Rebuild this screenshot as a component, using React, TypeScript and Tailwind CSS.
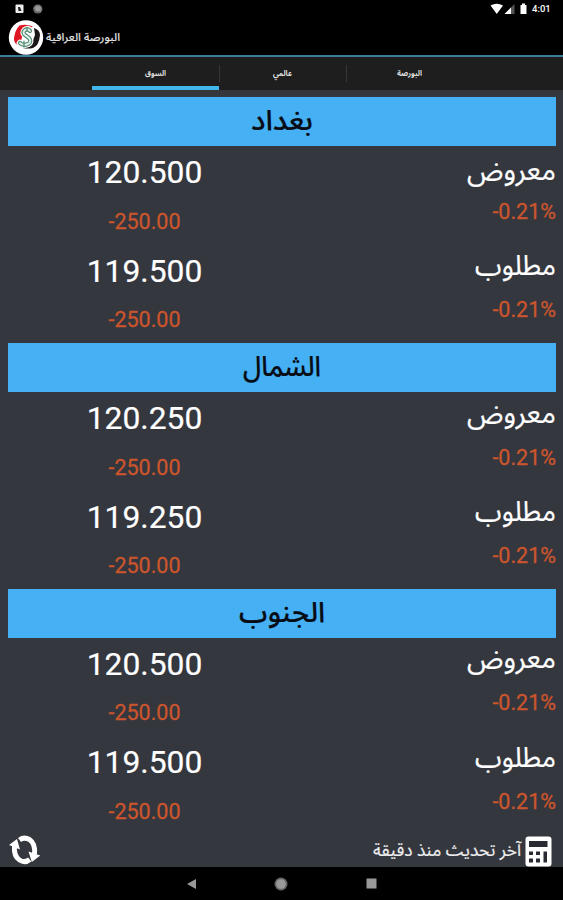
import React from "react";

const arabic = "font-['Noto_Sans_Arabic','DejaVu_Sans',sans-serif]";

type Quote = { label: string; price: string };
type Market = { name: string; nameWidth: number; quotes: Quote[] };

const markets: Market[] = [
  { name: "بغداد", nameWidth: 62, quotes: [{ label: "معروض", price: "120.500" }, { label: "مطلوب", price: "119.500" }] },
  { name: "الشمال", nameWidth: 78, quotes: [{ label: "معروض", price: "120.250" }, { label: "مطلوب", price: "119.250" }] },
  { name: "الجنوب", nameWidth: 86, quotes: [{ label: "معروض", price: "120.500" }, { label: "مطلوب", price: "119.500" }] },
];

const labelWidths: Record<string, number> = { معروض: 89, مطلوب: 81 };

function Label({ text, width, size, weight = 400, color = "#fff", height = 40, baseline = 28, stroke = 0 }: {
  text: string; width: number; size: number; weight?: number; color?: string; height?: number; baseline?: number; stroke?: number;
}) {
  return (
    <svg width={width} height={height} className={`block overflow-visible ${arabic}`}>
      <text x={width / 2} y={baseline} textAnchor="middle" direction="rtl" fontSize={size} fontWeight={weight} fill={color} stroke={color} strokeWidth={stroke} textLength={width} lengthAdjust="spacingAndGlyphs">
        {text}
      </text>
    </svg>
  );
}

function Row({ quote, first }: { quote: Quote; first: boolean }) {
  return (
    <div className="flex h-[98.4px] justify-between pr-[7px] pl-[7px]">
      <div className="flex w-[275px] flex-col items-center">
        <div className="mt-[7px] h-[38px] text-[31.8px] leading-[38px] text-white [-webkit-text-stroke:0.2px_#fff]">{quote.price}</div>
        <div className="mt-[17.5px] text-[21.5px] leading-[26px] text-[#cb552c] [-webkit-text-stroke:0.3px_#cb552c]">-250.00</div>
      </div>
      <div className="flex flex-col items-end">
        <div className={first ? "h-[52.5px] pt-[6px]" : "h-[52.5px] pt-[2.5px]"}>
          <Label text={quote.label} width={labelWidths[quote.label]} size={28} stroke={0.2} />
        </div>
        <div className="text-[21.5px] leading-[26px] text-[#cb552c] [-webkit-text-stroke:0.3px_#cb552c]">-0.21%</div>
      </div>
    </div>
  );
}

function StatusBar() {
  return (
    <div className="flex h-[18px] items-center justify-between pr-[12px] pl-[15px]">
      <svg width="30" height="18" viewBox="0 0 30 18">
        <rect x=".5" y="4.5" width="8" height="8.5" rx="1" fill="#eee" />
        <path d="M3 7h2l1.5 4h-3z" fill="#222" />
        <circle cx="22.8" cy="9" r="4.6" fill="#777" />
        <circle cx="22.8" cy="9" r="3" fill="#999" />
        <path d="M19.5 9a3.3 3.3 0 0 0 5 2.8" stroke="#555" fill="none" />
      </svg>
      <div className="flex items-center">
        <svg width="38" height="18" viewBox="0 0 38 18" fill="#fff">
          <path d="M.5 5.4Q6.5 2 13 5.4L6.8 14z" />
          <path d="M14.5 14L24.5 4v10z" fill="#555" />
          <path d="M14.5 14L21 7.5V14z" />
          <path d="M30.5 5h1.5V3.5h3V5h1.5v9h-6z" />
        </svg>
        <span className="ml-[4px] w-[19px] text-[9.5px] leading-[18px] font-medium text-white">4:01</span>
      </div>
    </div>
  );
}

export default function App() {
  return (
    <div className="flex h-[900px] w-[563px] flex-col overflow-hidden bg-[#35373f] font-[Roboto,sans-serif]">
      <header className="h-[57px] border-b-2 border-[#3b7d96] bg-black">
        <StatusBar />
        <div className="flex h-[38px] items-center pl-[8px]">
          <svg width="36" height="36" viewBox="0 0 36 36">
            <circle cx="18" cy="18.5" r="17.2" fill="#fff" />
            <path d="M11.5 6.5Q18 4.500 25 7.500L19 10 14 18l-2 9Q5 24 6 19 7 11 11.500 6.500z" fill="#df1722" />
            <path d="M26 9q6 2 6 7-1 11-7 13-5 1-10 0l9-5 3-8z" fill="#1b1718" />
            <g fill="none" strokeLinecap="round">
              <path d="M22 12q-2-3-5-1-3 3 0 5l4 3q3 4-1 6-5 2-8-1" stroke="#fff" strokeWidth="6.5" />
              <path d="M22 12q-2-3-5-1-3 3 0 5l4 3q3 4-1 6-5 2-8-1" stroke="#4a8a6e" strokeWidth="4.2" />
              <path d="M22 12q-2-3-5-1-3 3 0 5l4 3q3 4-1 6-5 2-8-1" stroke="#e3efe8" strokeWidth="2" />
              <path d="M19 8.500v4M16 22v6" stroke="#4a8a6e" strokeWidth="1.200" />
            </g>
          </svg>
          <div className="ml-[2px]">
            <Label text="البورصة العراقية" width={74} size={11} height={20} baseline={14} color="#e6e6e6" stroke={0.2} />
          </div>
        </div>
      </header>
      <nav className="flex h-[35px] justify-center border-b-2 border-[#36363a] bg-[#1e1e1e] pl-[1px]">
        <div className="flex w-[127px] justify-center border-b-4 border-[#42b6ea] pt-[8px]">
          <Label text="السوق" width={21} size={8} weight={700} height={16} baseline={11} color="#ddd" />
        </div>
        <div className="flex w-[127px] justify-center bg-[linear-gradient(#363636,#363636)] bg-[length:1px_17px] bg-[position:0_8px] bg-no-repeat pt-[8px]">
          <Label text="عالمي" width={19} size={8} weight={700} height={16} baseline={11} color="#ddd" />
        </div>
        <div className="flex w-[127px] justify-center bg-[linear-gradient(#363636,#363636)] bg-[length:1px_17px] bg-[position:0_8px] bg-no-repeat pt-[8px]">
          <Label text="البورصة" width={25} size={8} weight={700} height={16} baseline={11} color="#ddd" />
        </div>
      </nav>
      <main className="h-[739px] pt-[5.4px]">
        {markets.map((m, i) => (
          <section key={i} className="h-[245.8px]">
            <div className="mx-[7.5px] flex h-[49px] justify-center bg-[#45b0f4] pt-[5px]">
              <Label text={m.name} width={m.nameWidth} size={28} color="#080c14" weight={500} stroke={0.2} />
            </div>
            {m.quotes.map((q, j) => <Row key={q.label} quote={q} first={i === 0 && j === 0} />)}
          </section>
        ))}
      </main>
      <footer className="flex h-[36px] justify-between pr-[11px] pl-[9px]">
        <svg width="32" height="34" viewBox="0 0 32 34" className="mt-[2px]">
          <g fill="none" stroke="#fff" strokeWidth="5">
            <path d="M10.500 7Q15 3.500 20.500 6.500Q26.500 10.500 25.500 21" />
            <path d="M20.800 26.500Q16 30.500 10.500 27Q4.500 23 5.500 13" />
          </g>
          <path d="M19.500 18.500l11.800 4-8.500 6.500zM0 12l8-6 3 10.500z" fill="#fff" />
        </svg>
        <div className="flex">
          <div className="mt-[8px] mr-[4px]">
            <Label text="آخر تحديث منذ دقيقة" width={148} size={18} height={26} baseline={17} color="#eee" stroke={0.2} />
          </div>
          <svg width="27" height="31" viewBox="0 0 27 31" className="mt-[4.500px]">
            <rect x=".5" y=".5" width="26" height="30" rx="3" fill="#fff" />
            <path d="M4 5h18.500v6H4zM4 15.500h4v3.500H4zM11 15.500h4v3.500h-4zM18.500 15.500h3.500V26.500h-3.500zM4 22.500h4v4H4zM11 22.500h4v4h-4z" fill="#292b32" />
          </svg>
        </div>
      </footer>
      <div className="flex h-[33px] items-center justify-center gap-[78px] bg-black">
        <svg width="10" height="12" viewBox="0 0 10 12" className="-mr-[1px]"><path d="M0 6l9-5v10z" fill="#999" /></svg>
        <svg width="14" height="14"><circle cx="7" cy="7" r="6.5" fill="#666" /><circle cx="7" cy="7" r="4.8" fill="#999" /></svg>
        <svg width="11" height="11"><rect x=".5" y=".5" width="10" height="10" fill="#999" /></svg>
      </div>
    </div>
  );
}
